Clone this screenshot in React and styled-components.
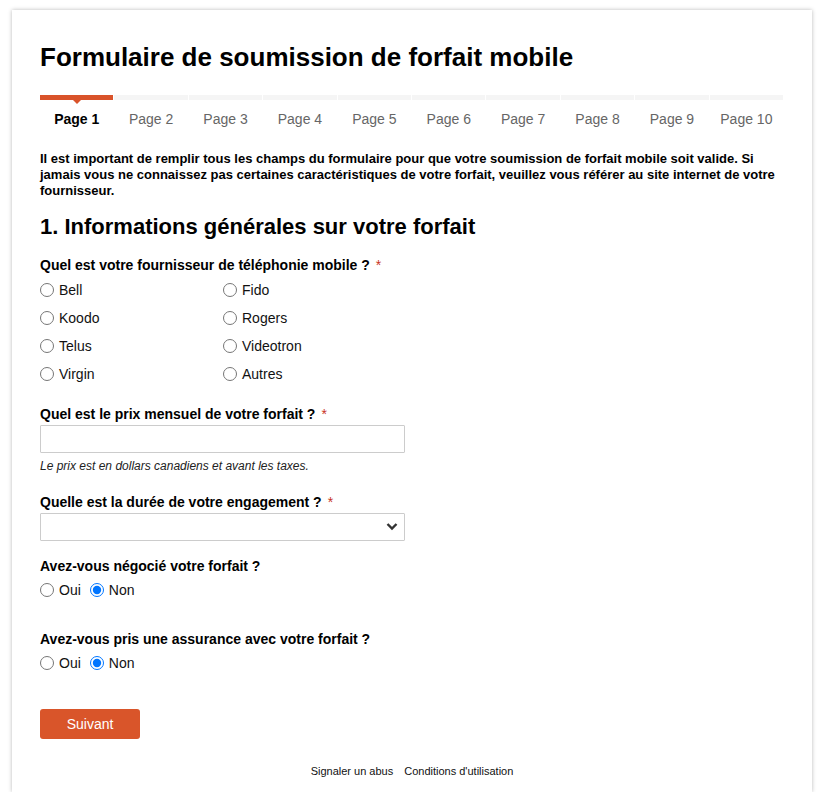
import React from 'react'
import styled, { createGlobalStyle } from 'styled-components'

const GlobalStyle = createGlobalStyle`
    body {
        margin: 0;
        background: #ffffff;
        font-family: Arial, 'Liberation Sans', sans-serif;
        color: #000;
    }
`;

const Card = styled.div`
    margin: 10px 0 0 12px;
    width: 800px;
    height: 782px;
    box-sizing: border-box;
    background: #fff;
    box-shadow: 0 0 4px rgba(0, 0, 0, 0.28);
    padding: 30px 28px 0 28px;
    display: flex;
    flex-direction: column;
`;

const Title = styled.h1`
    margin: 0;
    font-size: 26px;
    line-height: 34px;
    font-weight: bold;
`;

const Tabs = styled.div`
    display: flex;
    gap: 1px;
    margin-top: 21px;
    width: 743px;
`;

const Tab = styled.div`
    flex: 1;
    display: flex;
    flex-direction: column;
    align-items: center;
    position: relative;
`;

const TabBar = styled.div`
    align-self: stretch;
    height: 5px;
    background: ${p => (p.$active ? '#d9532a' : '#f5f5f5')};
`;

const Pointer = styled.div`
    position: absolute;
    top: 5px;
    left: 50%;
    margin-left: -4px;
    border-left: 4px solid transparent;
    border-right: 4px solid transparent;
    border-top: 4px solid #d9532a;
`;

const TabLabel = styled.span`
    margin-top: 10px;
    font-size: 14px;
    line-height: 18px;
    font-weight: ${p => (p.$active ? 'bold' : 'normal')};
    color: ${p => (p.$active ? '#000' : '#666')};
`;

const Intro = styled.p`
    margin: 23px 0 0 0;
    font-size: 13px;
    line-height: 16px;
    font-weight: bold;
    width: 745px;
`;

const Section = styled.h2`
    margin: 14px 0 0 0;
    font-size: 22px;
    line-height: 28px;
    font-weight: bold;
`;

const Question = styled.div`
    margin-top: ${p => p.$top || 0}px;
    font-size: 14px;
    line-height: 16px;
    font-weight: bold;
`;

const Star = styled.span`
    color: #c8321f;
    font-weight: normal;
    margin-left: 6px;
`;

const RadioGrid = styled.div`
    display: grid;
    grid-template-columns: 183px 183px;
    grid-auto-rows: 28px;
    margin-top: 3px;
`;

const RadioRow = styled.div`
    display: flex;
    gap: 9px;
    height: 28px;
    margin-top: 2px;
`;

const Choice = styled.label`
    display: flex;
    align-items: center;
    font-size: 14px;
    line-height: 18px;
    color: #111;
`;

const Radio = styled.input.attrs({ type: 'radio' })`
    margin: 0 5px 0 0;
    width: 14px;
    height: 14px;
`;

const TextInput = styled.input`
    display: block;
    margin-top: 3px;
    width: 365px;
    height: 28px;
    box-sizing: border-box;
    border: 1px solid #ccc;
    border-radius: 1px;
    font-size: 14px;
    padding: 0 6px;
`;

const Help = styled.div`
    margin-top: 6px;
    font-size: 12px;
    line-height: 15px;
    font-style: italic;
    color: #222;
`;

const SelectWrap = styled.div`
    position: relative;
    margin-top: 3px;
    width: 365px;
    height: 28px;
`;

const Select = styled.select`
    appearance: none;
    width: 100%;
    height: 100%;
    box-sizing: border-box;
    border: 1px solid #ccc;
    border-radius: 1px;
    background: #fff;
    font-size: 14px;
`;

const Chevron = styled.svg`
    position: absolute;
    right: 7px;
    top: 9px;
    pointer-events: none;
`;

const Button = styled.button`
    margin-top: 32px;
    width: 100px;
    height: 30px;
    border: none;
    border-radius: 3px;
    background: #d9552a;
    color: #fff;
    font-family: Arial, 'Liberation Sans', sans-serif;
    font-size: 14px;
    align-self: flex-start;
`;

const Footer = styled.div`
    display: flex;
    justify-content: center;
    gap: 11px;
    margin-top: 25px;
    font-size: 11px;
    line-height: 14px;
    color: #111;
`;

const pages = ['Page 1', 'Page 2', 'Page 3', 'Page 4', 'Page 5', 'Page 6', 'Page 7', 'Page 8', 'Page 9', 'Page 10'];
const providers = ['Bell', 'Fido', 'Koodo', 'Rogers', 'Telus', 'Videotron', 'Virgin', 'Autres'];

function YesNo({ name }) {
    return (
        <RadioRow>
            <Choice><Radio name={name} />Oui</Choice>
            <Choice><Radio name={name} defaultChecked />Non</Choice>
        </RadioRow>
    );
}

export default function App() {
    return (
        <>
            <GlobalStyle />
            <Card>
                <Title>Formulaire de soumission de forfait mobile</Title>
                <Tabs>
                    {pages.map((p, i) => (
                        <Tab key={p}>
                            <TabBar $active={i === 0} />
                            {i === 0 && <Pointer />}
                            <TabLabel $active={i === 0}>{p}</TabLabel>
                        </Tab>
                    ))}
                </Tabs>
                <Intro>
                    Il est important de remplir tous les champs du formulaire pour que votre soumission de forfait mobile soit valide. Si jamais vous ne connaissez pas certaines caractéristiques de votre forfait, veuillez vous référer au site internet de votre fournisseur.
                </Intro>
                <Section>1. Informations générales sur votre forfait</Section>
                <Question $top={16}>Quel est votre fournisseur de téléphonie mobile ?<Star>*</Star></Question>
                <RadioGrid>
                    {providers.map(p => (
                        <Choice key={p}><Radio name="fournisseur" />{p}</Choice>
                    ))}
                </RadioGrid>
                <Question $top={18}>Quel est le prix mensuel de votre forfait ?<Star>*</Star></Question>
                <TextInput type="text" />
                <Help>Le prix est en dollars canadiens et avant les taxes.</Help>
                <Question $top={20}>Quelle est la durée de votre engagement ?<Star>*</Star></Question>
                <SelectWrap>
                    <Select defaultValue="">
                        <option value=""></option>
                    </Select>
                    <Chevron width="12" height="9" viewBox="0 0 12 9">
                        <path d="M1.5 2 L6 6.5 L10.5 2" fill="none" stroke="#333" strokeWidth="2.4" />
                    </Chevron>
                </SelectWrap>
                <Question $top={17}>Avez-vous négocié votre forfait ?</Question>
                <YesNo name="negocie" />
                <Question $top={27}>Avez-vous pris une assurance avec votre forfait ?</Question>
                <YesNo name="assurance" />
                <Button>Suivant</Button>
                <Footer>
                    <span>Signaler un abus</span>
                    <span>Conditions d'utilisation</span>
                </Footer>
            </Card>
        </>
    );
}
